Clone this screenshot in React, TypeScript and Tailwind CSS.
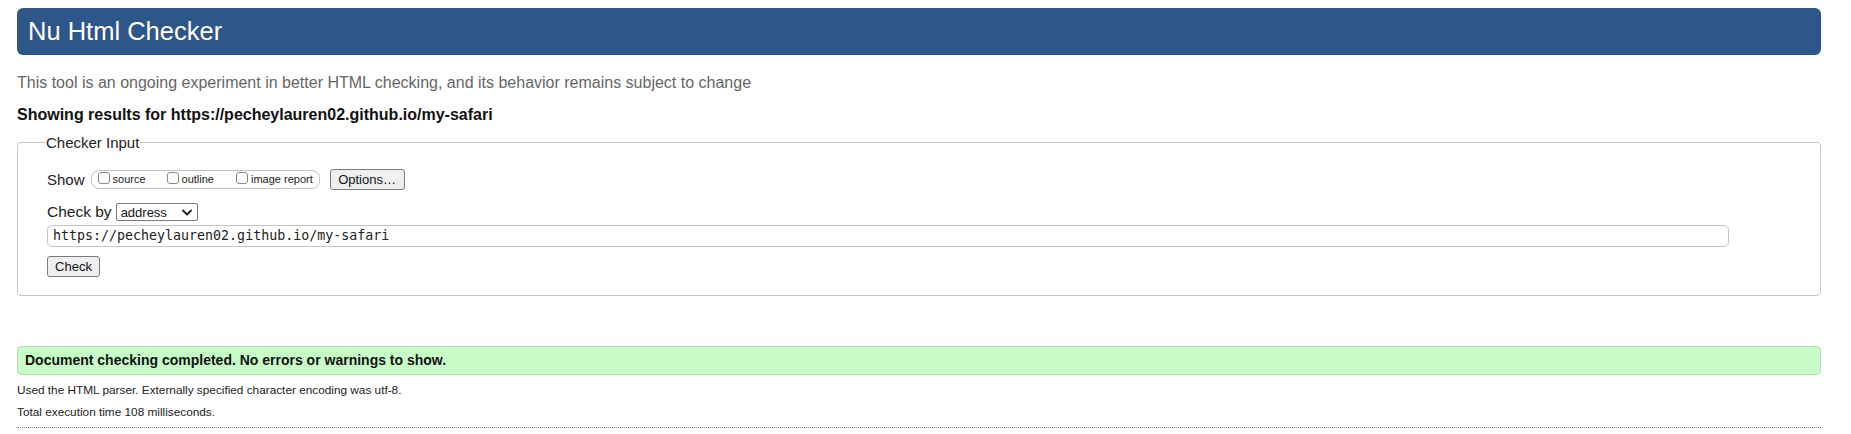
import React from 'react'

const sans = { fontFamily: '"Liberation Sans", Arial, sans-serif' }

function Box() {
  return <span className="inline-block w-[12px] h-[12px] border border-[#8a8a8a] rounded-[3px] bg-white mr-[3px] self-center -mt-[3px]" />
}

export default function App() {
  return (
    <div className="bg-white min-h-[434px] pt-[8px] text-black" style={sans}>
      <div className="ml-[17px] w-[1804px]">
        {/* Title bar */}
        <h1 className="h-[47px] flex items-center pl-[11px] bg-[#2f5689] rounded-[6px] text-white text-[25.5px] leading-none font-normal">
          Nu Html Checker
        </h1>

        <p className="mt-[19px] text-[16px] leading-[18px] text-[#666]">
          This tool is an ongoing experiment in better HTML checking, and its behavior remains subject to change
        </p>
        <p className="mt-[14px] text-[16px] leading-[18px] font-bold text-[#111]">
          Showing results for https://pecheylauren02.github.io/my-safari
        </p>

        {/* Checker input */}
        <fieldset className="mt-[10px] border border-[#c6c6c6] rounded-[4px] pl-[29px] pb-[18px]">
          <legend className="-ml-[2px] px-[1px] text-[15px] leading-[17px] text-[#222]">Checker Input</legend>

          <div className="mt-[18px] flex items-center h-[21px]">
            <span className="text-[15px] leading-none text-[#222]">Show</span>
            <div className="ml-[6px] h-[19px] w-[229px] flex items-center border border-[#c4c4c4] rounded-[8px] pl-[6px] text-[11px] leading-none text-[#222]">
              <span className="flex items-end"><Box />source</span>
              <span className="flex items-end ml-[21px]"><Box />outline</span>
              <span className="flex items-end ml-[22px]"><Box />image report</span>
            </div>
            <div className="ml-[10px] h-[21px] w-[75px] flex items-center justify-center bg-[#efefef] border border-[#7a7a7a] rounded-[3px] text-[13px] leading-none text-[#111]">
              Options…
            </div>
          </div>

          <div className="mt-[13px] flex items-center h-[18px]">
            <span className="text-[15.5px] leading-none text-[#222]">Check by</span>
            <div className="ml-[4px] h-[18px] w-[82px] flex items-center justify-between border border-[#7a7a7a] rounded-[2px] pl-[4px] pr-[5px] text-[13px] leading-none text-[#111]">
              <span>address</span>
              <svg width="10" height="7" viewBox="0 0 10 7" fill="none">
                <path d="M1 1.5 L5 5.5 L9 1.5" stroke="#222" strokeWidth="1.8" strokeLinecap="round" strokeLinejoin="round" />
              </svg>
            </div>
          </div>

          <div className="mt-[4px] h-[22px] w-[1682px] flex items-center border border-[#c4c4c4] rounded-[5px] pl-[5px] text-[13.3px] leading-none text-[#222]" style={{ fontFamily: '"DejaVu Sans Mono", monospace' }}>
            https://pecheylauren02.github.io/my-safari
          </div>

          <div className="mt-[9px] h-[21px] w-[53px] flex items-center justify-center bg-[#efefef] border border-[#7a7a7a] rounded-[3px] text-[13px] leading-none text-[#111]">
            Check
          </div>
        </fieldset>

        {/* Result */}
        <div className="mt-[50px] h-[29px] flex items-center pl-[7px] bg-[#c8fdc8] border border-[#b4dcb4] rounded-[4px] text-[14px] font-bold text-[#111]">
          Document checking completed. No errors or warnings to show.
        </div>
        <p className="mt-[8px] text-[11.8px] leading-[14px] text-[#222]">
          Used the HTML parser. Externally specified character encoding was utf-8.
        </p>
        <p className="mt-[8px] text-[11.8px] leading-[14px] text-[#222]">Total execution time 108 milliseconds.</p>
        <div className="mt-[8px] border-t border-dotted border-[#777]" />
      </div>
    </div>
  )
}
